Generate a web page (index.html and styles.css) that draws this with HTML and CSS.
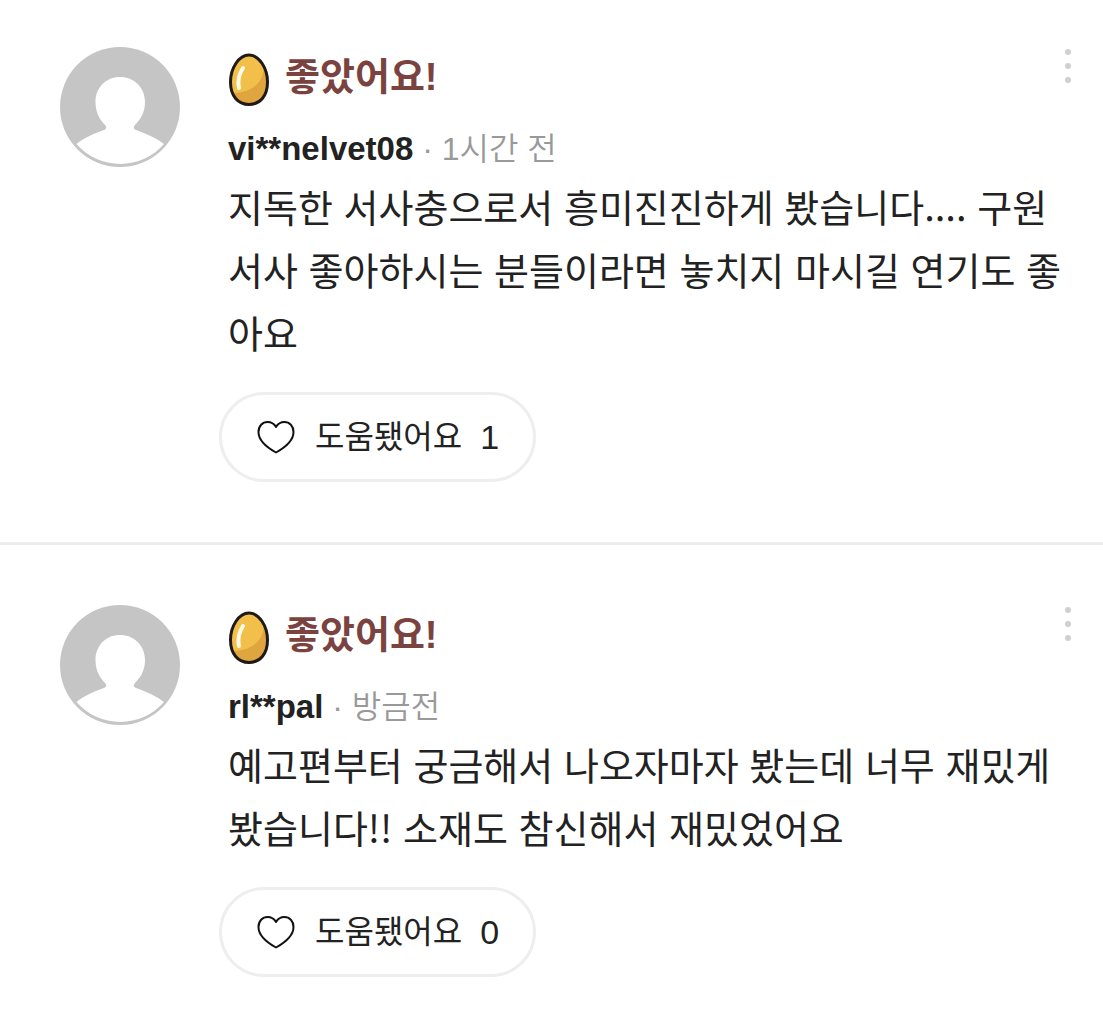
FILE: index.html
```html
<!DOCTYPE html>
<html lang="ko">
<head>
<meta charset="utf-8">
<meta name="viewport" content="width=device-width, initial-scale=1">
<title>리뷰</title>
<link rel="stylesheet" href="styles.css">
</head>
<body>
<svg class="sprite" aria-hidden="true">
  <symbol id="avatar" viewBox="0 0 120 120">
    <circle cx="60" cy="60" r="60" fill="#c5c5c5"/>
    <path d="M60 30C46 30 35.500 40.500 35.500 55C35.500 66 40 73 45 78C47 80 46.500 82 44 83C33 87 24 91 16.500 97A58 58 0 0 0 104 97C96 91 87 87 76 83C73.500 82 73 80 75 78C80 73 85 66 85 55C85 40.500 74 30 60 30Z" fill="#fff"/>
  </symbol>
  <symbol id="egg" viewBox="0 0 42 56">
    <path d="M21 3C11 3 2.500 16 2.500 30C2.500 44 10 52.500 21 52.500S39.500 44 39.500 30C39.500 16 31 3 21 3Z" fill="#f2c04a"/>
    <path d="M36 15C35 30 26 40 5 41C8 48 14 52 21 52C31 52 39 44 39 30C39 24 38 19 36 15Z" fill="#dfa63f"/>
    <path d="M15 16C11 22 9.500 29 11 36" fill="none" stroke="#fffbe8" stroke-width="4" stroke-linecap="round"/>
    <path d="M21 3C11 3 2.500 16 2.500 30C2.500 44 10 52.500 21 52.500S39.500 44 39.500 30C39.500 16 31 3 21 3Z" fill="none" stroke="#1f1a17" stroke-width="3"/>
  </symbol>
  <symbol id="heart" viewBox="0 0 38 34">
    <path d="M19 7C17 3.500 14 2 10.500 2C5.500 2 1.500 6 1.500 12C1.500 20 10 27.500 19 32.500C28 27.500 36.500 20 36.500 12C36.500 6 32.500 2 27.500 2C24 2 21 3.500 19 7Z" fill="none" stroke="#111" stroke-width="2" stroke-linejoin="round"/>
  </symbol>
  <symbol id="more" viewBox="0 0 6 34">
    <g fill="#d0d0d0"><circle cx="3" cy="3" r="3"/><circle cx="3" cy="17" r="3"/><circle cx="3" cy="31" r="3"/></g>
  </symbol>
</svg>
<main class="reviews">
  <article class="review">
    <svg class="avatar" role="img" aria-label="프로필"><use href="#avatar"/></svg>
    <div class="content">
      <h2 class="rating"><svg class="egg" aria-hidden="true"><use href="#egg"/></svg><span class="rating-text">좋았어요!</span></h2>
      <p class="meta"><strong class="name">vi**nelvet08</strong> · <time>1시간 전</time></p>
      <p class="body">지독한 서사충으로서 흥미진진하게 봤습니다.... 구원 서사 좋아하시는 분들이라면 놓치지 마시길 연기도 좋아요</p>
      <button class="helpful" type="button"><svg class="heart" aria-hidden="true"><use href="#heart"/></svg><span>도움됐어요</span><span class="count">1</span></button>
    </div>
    <button class="more" type="button" aria-label="더보기"><svg class="dots" aria-hidden="true"><use href="#more"/></svg></button>
  </article>
  <article class="review">
    <svg class="avatar" role="img" aria-label="프로필"><use href="#avatar"/></svg>
    <div class="content">
      <h2 class="rating"><svg class="egg" aria-hidden="true"><use href="#egg"/></svg><span class="rating-text">좋았어요!</span></h2>
      <p class="meta"><strong class="name">rl**pal</strong> · <time>방금전</time></p>
      <p class="body">예고편부터 궁금해서 나오자마자 봤는데 너무 재밌게 봤습니다!! 소재도 참신해서 재밌었어요</p>
      <button class="helpful" type="button"><svg class="heart" aria-hidden="true"><use href="#heart"/></svg><span>도움됐어요</span><span class="count">0</span></button>
    </div>
    <button class="more" type="button" aria-label="더보기"><svg class="dots" aria-hidden="true"><use href="#more"/></svg></button>
  </article>
</main>
</body>
</html>
```
FILE: styles.css
```css
* {
  box-sizing: border-box;
}

body {
  margin: 0;
  background: #fff;
  color: #222;
  font-family: "Liberation Sans", "Noto Sans CJK KR", sans-serif;
}

h2,
p {
  margin: 0;
}

button {
  border: 0;
  padding: 0;
  background: none;
  color: inherit;
  font-family: inherit;
  cursor: pointer;
}

svg {
  display: block;
  flex: none;
}

.sprite {
  position: absolute;
  width: 0;
  height: 0;
}

.review {
  display: flex;
  align-items: flex-start;
  padding: 60px 32px 60px 60px;
}

.review:first-child {
  padding-top: 47px;
}

.review + .review {
  border-top: 3px solid #ececec;
}

.avatar {
  width: 120px;
  height: 120px;
  margin-right: 48px;
}

.content {
  flex: 1;
  min-width: 0;
}

.rating {
  display: flex;
  align-items: flex-start;
  gap: 15px;
  padding-top: 5px;
  height: 66px;
  color: #7b4340;
  font-size: 38px;
  line-height: 50px;
}

.egg {
  width: 42px;
  height: 56px;
}

.meta {
  margin-top: 12px;
  color: #999;
  font-size: 32px;
  font-weight: 350;
  line-height: 48px;
}

.name {
  color: #222;
  font-size: 33px;
  font-weight: 700;
}

.body {
  margin-top: 1px;
  font-family: "Noto Sans CJK KR", sans-serif;
  font-size: 38px;
  line-height: 63px;
}

.helpful {
  display: flex;
  align-items: center;
  height: 90px;
  margin: 29px 0 0 -9px;
  padding: 0 34px 0 35px;
  border: 3px solid #eee;
  border-radius: 45px;
  font-size: 32px;
  line-height: 48px;
}

.heart {
  width: 38px;
  height: 34px;
  margin-right: 20px;
}

.count {
  margin-left: 18px;
  font-size: 34px;
}

.more {
  margin-top: 2px;
}

.dots {
  width: 6px;
  height: 34px;
}
```
